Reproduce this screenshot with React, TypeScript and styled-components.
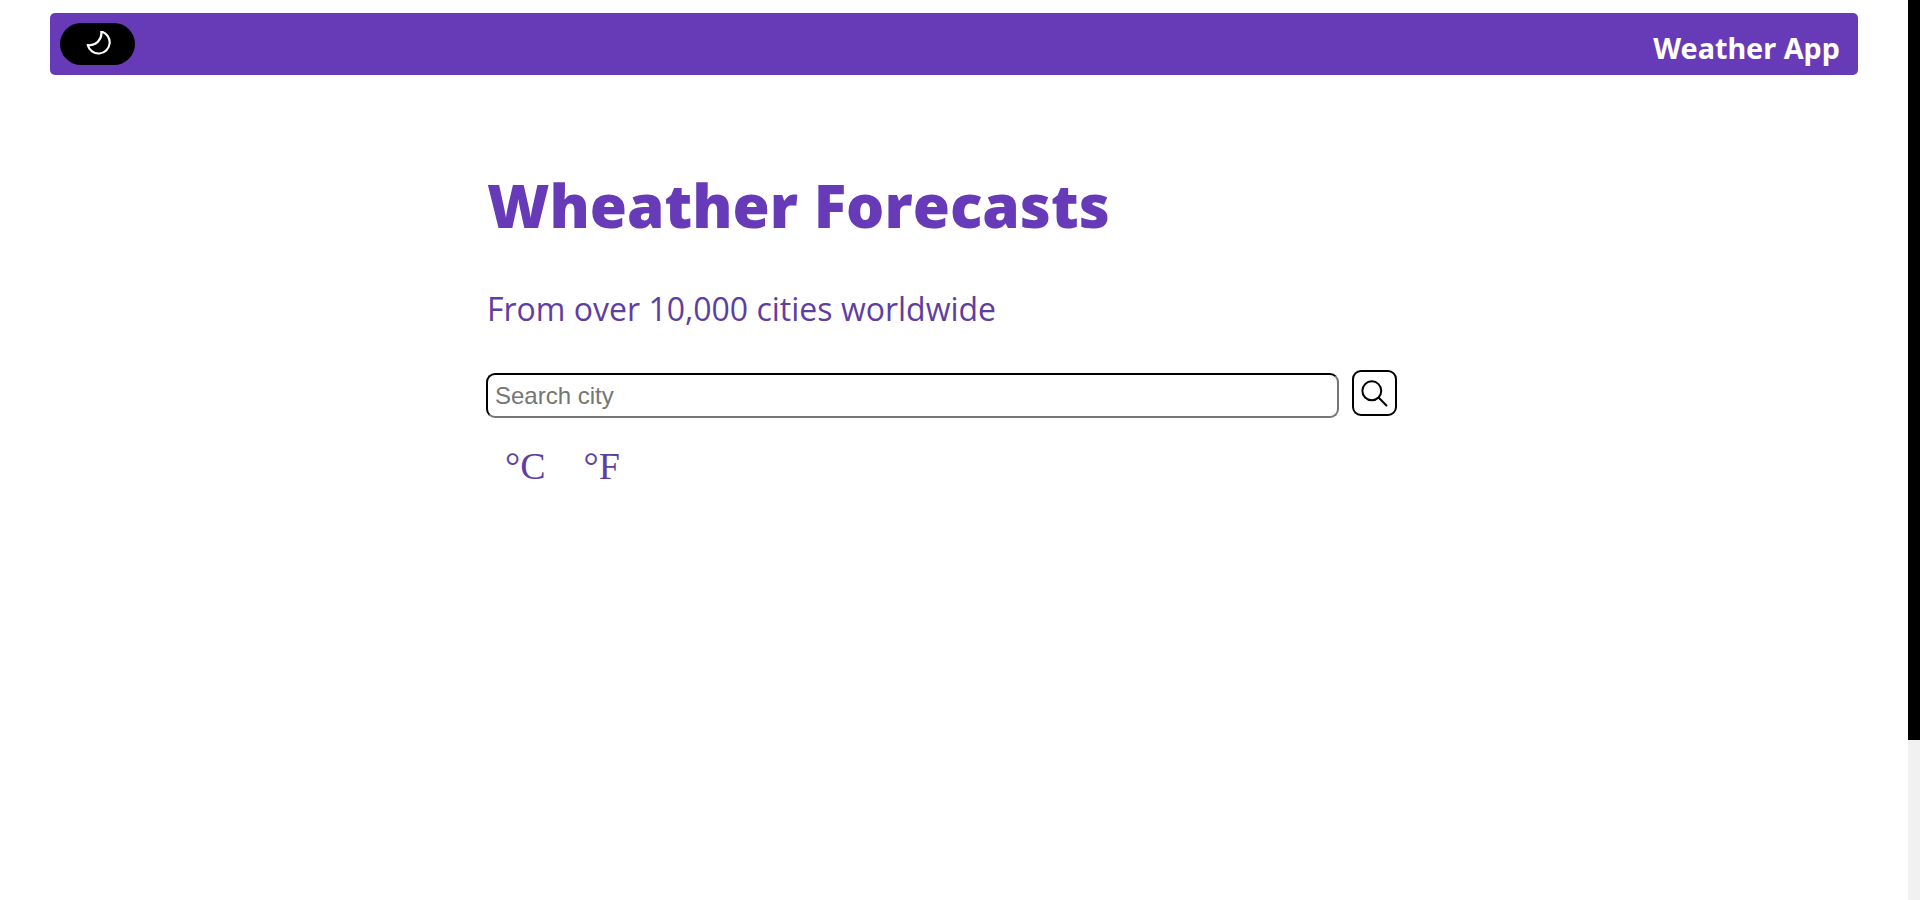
import React from 'react';
import styled, { createGlobalStyle } from 'styled-components';

const GlobalStyle = createGlobalStyle`
  body {
    margin: 0;
    background: #fff;
    font-family: "Open Sans", sans-serif;
  }
`;

const Window = styled.div`
  display: flex;
  height: 100vh;
  overflow: hidden;
`;

const Page = styled.div`
  flex: 1;
  min-width: 0;
  padding: 13px 50px 0;
`;

const ScrollTrack = styled.div`
  flex: none;
  width: 12px;
  background: #f1f1f1;
`;

const ScrollThumb = styled.div`
  height: 740px;
  background: #000;
`;

const NavBar = styled.nav`
  display: flex;
  align-items: center;
  justify-content: space-between;
  height: 62px;
  padding: 0 18px 0 10px;
  background: #673ab7;
  border-radius: 5px;
`;

const ThemeToggle = styled.button`
  display: flex;
  align-items: center;
  justify-content: center;
  width: 75px;
  height: 42px;
  padding: 0;
  margin-top: -1px;
  border: none;
  border-radius: 21px;
  background: #000;
  color: #fff;
`;

const Brand = styled.span`
  margin-top: 7px;
  font-family: "Noto Sans", sans-serif;
  font-size: 28.8px;
  font-weight: 700;
  color: #fff;
`;

const Main = styled.main`
  width: 911px;
  margin: 89px 0 0 436px;
`;

const Title = styled.h1`
  margin: 0 0 0 1px;
  font-family: "Open Sans", sans-serif;
  font-size: 60.2px;
  line-height: 82px;
  font-weight: 800;
  color: #673ab7;
`;

const Subtitle = styled.p`
  margin: 41px 0 0 1px;
  font-size: 32px;
  line-height: 44px;
  color: #5e3ea1;
`;

const SearchForm = styled.form`
  display: flex;
  align-items: flex-end;
  gap: 13px;
  margin-top: 39px;
`;

const SearchInput = styled.input`
  box-sizing: border-box;
  flex: 1;
  height: 45px;
  padding: 0 7px;
  border: 2px solid;
  border-color: #000 #767676 #767676 #000;
  border-radius: 9px;
  outline: none;
  font-family: "Liberation Sans", Arial, sans-serif;
  font-size: 24px;
  &::placeholder {
    color: #757575;
  }
`;

const SearchButton = styled.button`
  display: flex;
  align-items: center;
  justify-content: center;
  box-sizing: border-box;
  width: 45px;
  height: 46px;
  margin-bottom: 2px;
  padding: 0;
  border: 2px solid #000;
  border-radius: 9px;
  background: #fff;
  color: #000;
`;

const UnitRow = styled.div`
  display: flex;
  gap: 38px;
  margin: 25px 0 0 19px;
`;

const Unit = styled.span`
  font-family: "Liberation Serif", "Times New Roman", serif;
  font-size: 38px;
  line-height: 46px;
  color: #5e3ea1;
`;

const MoonIcon = () => (
  <svg width="26" height="26" viewBox="0 2 24 24" fill="none" stroke="currentColor" strokeWidth="2" strokeLinejoin="round">
    <path d="M15 2.5A10.3 10.3 0 1 1 2.5 15 11 11 0 0 0 15 2.5z" />
  </svg>
);

const SearchIcon = () => (
  <svg width="27" height="27" viewBox="0 0 24 24" fill="none" stroke="currentColor" strokeWidth="1.8" strokeLinecap="round">
    <circle cx="9.6" cy="9.6" r="8.4" />
    <path d="M15.8 15.8 22.6 22.6" />
  </svg>
);

const App = () => {
  return (
    <Window>
      <GlobalStyle />
      <Page>
        <NavBar>
          <ThemeToggle type="button" aria-label="Toggle theme">
            <MoonIcon />
          </ThemeToggle>
          <Brand>Weather App</Brand>
        </NavBar>
        <Main>
          <Title>Wheather Forecasts</Title>
          <Subtitle>From over 10,000 cities worldwide</Subtitle>
          <SearchForm>
            <SearchInput placeholder="Search city" />
            <SearchButton type="button" aria-label="Search">
              <SearchIcon />
            </SearchButton>
          </SearchForm>
          <UnitRow>
            <Unit>°C</Unit>
            <Unit>°F</Unit>
          </UnitRow>
        </Main>
      </Page>
      <ScrollTrack>
        <ScrollThumb />
      </ScrollTrack>
    </Window>
  );
};

export default App;
